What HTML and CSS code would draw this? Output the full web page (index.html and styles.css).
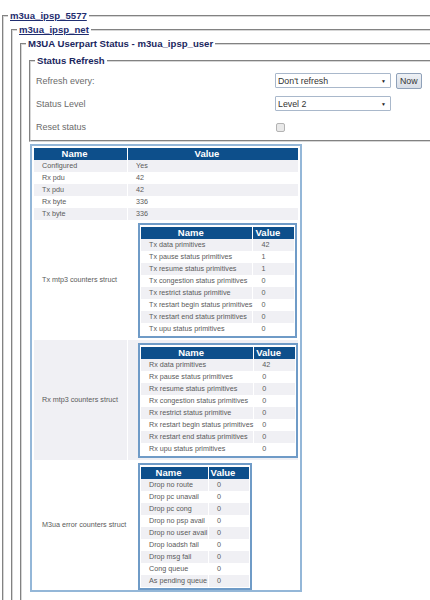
FILE: index.html
```html
<!DOCTYPE html>
<html lang="en">
<head>
    <meta charset="UTF-8">
    <title>M3UA Userpart Status</title>
    <link rel="stylesheet" href="styles.css">
</head>
<body>
    <div class="page">
        <fieldset class="group">
            <legend><a href="#">m3ua_ipsp_5577</a></legend>
            <fieldset class="group">
                <legend><a href="#">m3ua_ipsp_net</a></legend>
                <fieldset class="group">
                    <legend>M3UA Userpart Status - m3ua_ipsp_user</legend>

                    <fieldset class="refresh">
                        <legend>Status Refresh</legend>
                        <div class="form-row">
                            <span class="label">Refresh every:</span>
                            <div class="controls">
                                <div class="select"><span>Don't refresh</span><span class="arrow">▼</span></div>
                                <button class="btn">Now</button>
                            </div>
                        </div>
                        <div class="form-row">
                            <span class="label">Status Level</span>
                            <div class="controls">
                                <div class="select"><span>Level 2</span><span class="arrow">▼</span></div>
                            </div>
                        </div>
                        <div class="form-row">
                            <span class="label">Reset status</span>
                            <div class="controls">
                                <span class="checkbox"></span>
                            </div>
                        </div>
                    </fieldset>

                    <div class="stats">
                        <table class="grid main">
                            <colgroup><col class="c-name"><col></colgroup>
                            <thead>
                                <tr><th>Name</th><th>Value</th></tr>
                            </thead>
                            <tbody>
                                <tr><td>Configured</td><td>Yes</td></tr>
                                <tr><td>Rx pdu</td><td>42</td></tr>
                                <tr><td>Tx pdu</td><td>42</td></tr>
                                <tr><td>Rx byte</td><td>336</td></tr>
                                <tr><td>Tx byte</td><td>336</td></tr>
                                <tr>
                                    <td>Tx mtp3 counters struct</td>
                                    <td class="nest">
                                        <div class="sub">
                                            <table class="grid mtp3">
                                                <colgroup><col class="c-name"><col class="c-val"></colgroup>
                                                <thead><tr><th>Name</th><th>Value</th></tr></thead>
                                                <tbody>
                                                    <tr><td>Tx data primitives</td><td>42</td></tr>
                                                    <tr><td>Tx pause status primitives</td><td>1</td></tr>
                                                    <tr><td>Tx resume status primitives</td><td>1</td></tr>
                                                    <tr><td>Tx congestion status primitives</td><td>0</td></tr>
                                                    <tr><td>Tx restrict status primitive</td><td>0</td></tr>
                                                    <tr><td>Tx restart begin status primitives</td><td>0</td></tr>
                                                    <tr><td>Tx restart end status primitives</td><td>0</td></tr>
                                                    <tr><td>Tx upu status primitives</td><td>0</td></tr>
                                                </tbody>
                                            </table>
                                        </div>
                                    </td>
                                </tr>
                                <tr>
                                    <td>Rx mtp3 counters struct</td>
                                    <td class="nest">
                                        <div class="sub">
                                            <table class="grid mtp3">
                                                <colgroup><col class="c-name"><col class="c-val"></colgroup>
                                                <thead><tr><th>Name</th><th>Value</th></tr></thead>
                                                <tbody>
                                                    <tr><td>Rx data primitives</td><td>42</td></tr>
                                                    <tr><td>Rx pause status primitives</td><td>0</td></tr>
                                                    <tr><td>Rx resume status primitives</td><td>0</td></tr>
                                                    <tr><td>Rx congestion status primitives</td><td>0</td></tr>
                                                    <tr><td>Rx restrict status primitive</td><td>0</td></tr>
                                                    <tr><td>Rx restart begin status primitives</td><td>0</td></tr>
                                                    <tr><td>Rx restart end status primitives</td><td>0</td></tr>
                                                    <tr><td>Rx upu status primitives</td><td>0</td></tr>
                                                </tbody>
                                            </table>
                                        </div>
                                    </td>
                                </tr>
                                <tr>
                                    <td>M3ua error counters struct</td>
                                    <td class="nest last">
                                        <div class="sub">
                                            <table class="grid errors">
                                                <colgroup><col class="c-name"><col class="c-val"></colgroup>
                                                <thead><tr><th>Name</th><th>Value</th></tr></thead>
                                                <tbody>
                                                    <tr><td>Drop no route</td><td>0</td></tr>
                                                    <tr><td>Drop pc unavail</td><td>0</td></tr>
                                                    <tr><td>Drop pc cong</td><td>0</td></tr>
                                                    <tr><td>Drop no psp avail</td><td>0</td></tr>
                                                    <tr><td>Drop no user avail</td><td>0</td></tr>
                                                    <tr><td>Drop loadsh fail</td><td>0</td></tr>
                                                    <tr><td>Drop msg fail</td><td>0</td></tr>
                                                    <tr><td>Cong queue</td><td>0</td></tr>
                                                    <tr><td>As pending queue</td><td>0</td></tr>
                                                </tbody>
                                            </table>
                                        </div>
                                    </td>
                                </tr>
                            </tbody>
                        </table>
                    </div>
                </fieldset>
            </fieldset>
        </fieldset>
    </div>
</body>
</html>
```

FILE: styles.css
```css
html, body {
    margin: 0;
    overflow: hidden;
    background: #fff;
}
body {
    font-family: "Liberation Sans", Arial, sans-serif;
}
.page {
    width: 520px;
    padding: 10px 0 0 2px;
}

/* nested fieldsets */
fieldset {
    margin: 0;
    min-width: 0;
    border: 2px groove #d6d6d6;
}
legend {
    padding: 0 2px;
    font-size: 9.6px;
    line-height: 12px;
    font-weight: bold;
    color: #1b2760;
}
legend a {
    color: #1f2d70;
    text-decoration: underline;
}
.group {
    padding: 2px 0 10px 7px;
}
.group > legend {
    margin-left: -3px;
}

/* status refresh */
.refresh {
    margin-top: 3px;
    padding: 2px 0 2px 5px;
}
.refresh > legend {
    margin-left: -1px;
}
.form-row {
    display: grid;
    grid-template-columns: 239px auto;
    align-items: center;
    height: 23px;
}
.label {
    font-size: 9px;
    color: #6b6b6b;
}
.controls {
    display: flex;
    align-items: center;
    gap: 5px;
}
.select {
    width: 116px;
    height: 15px;
    box-sizing: border-box;
    border: 1px solid #a9b8cb;
    border-radius: 1px;
    background: #fff;
    display: flex;
    align-items: center;
    justify-content: space-between;
    padding: 0 4px 0 2px;
    font-size: 8.8px;
    color: #333;
}
.arrow {
    font-size: 5px;
    color: #222;
}
.btn {
    height: 16px;
    padding: 0 3px;
    border: 1px solid #8fa1b9;
    border-radius: 2px;
    background: linear-gradient(#eef1f5, #d8dee7);
    font-family: inherit;
    font-size: 8.8px;
    color: #333;
}
.checkbox {
    display: block;
    width: 7px;
    height: 7px;
    margin: 1px 0 0 1px;
    border: 1px solid #b3b3b3;
    border-radius: 2px;
    background: #e9e9e9;
}

/* statistics */
.stats {
    width: 272px;
    box-sizing: border-box;
    margin: 2px 0 0 1px;
    padding: 2px 1px 0;
    border: 2px solid #94b7d8;
}
.grid {
    border-collapse: separate;
    border-spacing: 1px 0;
    table-layout: fixed;
}
.main {
    width: 100%;
}
.main .c-name {
    width: 93px;
}
.grid th {
    height: 12px;
    padding: 0 12px 0 0;
    background: #0d4f8b;
    color: #fff;
    font-size: 9.5px;
    line-height: 12px;
    text-align: center;
}
.grid td {
    height: 12px;
    padding: 0 0 0 8px;
    font-size: 7.2px;
    line-height: 12px;
    color: #5a5a5a;
    white-space: nowrap;
    background: #fff;
}
.grid > tbody > tr:nth-child(odd) > td {
    background: #f0f0f4;
}
.grid td.nest {
    padding: 3px 0 2px 10px;
}
.grid td.nest.last {
    padding-bottom: 0;
}
.sub {
    display: inline-block;
    vertical-align: top;
    padding: 2px 0 1px;
    border: 2px solid #6f9bc7;
    background: #fff;
}
.mtp3 .c-name {
    width: 110px;
}
.mtp3 .c-val {
    width: 41px;
}
.errors .c-name {
    width: 67px;
}
.errors .c-val {
    width: 40px;
}
```
